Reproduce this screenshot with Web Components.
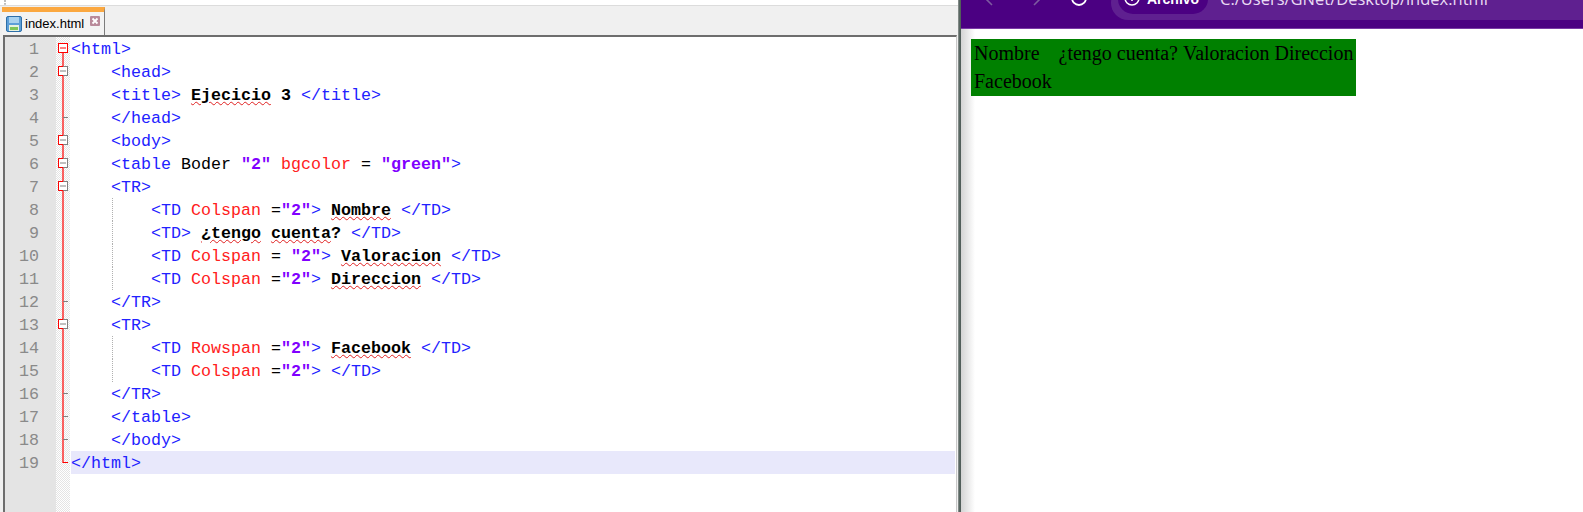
<!DOCTYPE html>
<html><head><meta charset="utf-8"><style>
html,body{margin:0;padding:0;background:#fff;overflow:hidden}
body{width:1583px;height:512px;display:flex;align-items:stretch}
editor-pane{flex:0 0 958px}
pane-splitter{flex:0 0 3px}
browser-pane{flex:1 1 auto}
</style></head><body>
<editor-pane></editor-pane>
<pane-splitter></pane-splitter>
<browser-pane></browser-pane>
<template id="ed"><style>
:host{display:flex;flex-direction:column;height:512px;background:#f0f0f0;overflow:hidden;font-family:"Liberation Sans",sans-serif;box-sizing:border-box;position:relative}
.top{height:5px;background:#fff;border-bottom:1px solid #dcdcdc;flex:none;position:relative}
.top i{position:absolute;left:4px;top:0;height:5px;border-left:2px dotted #bdbdbd}
.tabs{height:29px;flex:none;display:flex;align-items:flex-end;padding-left:2px;background:#f0f0f0}
.tab{width:103px;height:28px;box-sizing:border-box;background:#f3f3f3;border-top:5px solid #fba840;border-right:1px solid #7c7c7c;display:flex;align-items:center;padding-left:4px;gap:3px;font-size:13px;color:#000;position:relative}
.x{width:10px;height:10px;margin-left:3px;margin-top:-6px}
.frame{flex:1;margin-left:3px;width:954px;box-sizing:border-box;border:2px solid #6d6d6d;border-right:1px solid #c8c8c8;border-bottom:0;background:#fff;display:flex;min-height:0}
.num{width:51px;background:#e4e4e4;flex:none;font:16.67px/25px "Liberation Mono",monospace;color:#8a8a8a;text-align:right;box-sizing:border-box}
.num div{height:23px;padding-right:17px}
.fold{width:14px;flex:none;background-color:#f1f1f1;background-image:conic-gradient(#e4e4e4 25%,#fff 0 50%,#e4e4e4 0 75%,#fff 0);background-size:2px 2px}
.fold svg{display:block}
.code{flex:1;min-width:0;margin-left:1px;padding-right:1px}
</style>
<div class="top"><i></i></div>
<div class="tabs"><div class="tab">
<svg width="16" height="16" viewBox="0 0 16 16"><rect x=".5" y=".5" width="15" height="15" rx="1.5" fill="#5d9fd8" stroke="#2e6fa8"/><rect x="3" y="1" width="10" height="6" fill="#a9d2ef"/><rect x="3" y="9" width="10" height="6" fill="#e8f3e0"/><rect x="4" y="11" width="8" height="3" fill="#7fc65a"/></svg>
<span>index.html</span>
<svg class="x" viewBox="0 0 10 10"><rect width="10" height="10" rx="1" fill="#b98a9a"/><path d="M2.5 2.5l5 5M7.5 2.5l-5 5" stroke="#fff" stroke-width="1.8"/></svg>
</div></div>
<div class="frame"><div class="num" id="num"></div>
<div class="fold"><svg width="14" height="437" viewBox="0 0 14 437" id="fsvg"></svg></div>
<div class="code" id="code"></div></div>
</template>
<template id="sp"><style>:host{display:block;height:512px;background:linear-gradient(90deg,#a8a8a8 0,#5c6b66 33%,#4e5a56 100%)}</style></template>
<template id="ln"><style>
:host{display:block;height:23px;font:16.67px/25px "Liberation Mono",monospace;white-space:pre;position:relative;color:#000}
:host([cur]){background:#e8e8fb}
.t{color:#2222ff}.a{color:#ff2020}.s{color:#8000ff;font-weight:bold}.b{font-weight:bold;color:#000;text-decoration:underline wavy #e02020 1px;text-underline-offset:1px}.n{font-weight:bold}
.g{position:absolute;left:41px;top:0;bottom:0;border-left:1px dotted #b0b0b0}
</style><span class="g" hidden></span><slot></slot></template>
<template id="br"><style>
:host{display:flex;flex-direction:column;height:512px;background:#fff;position:relative;font-family:"Liberation Sans",sans-serif}
:host::before{content:"";position:absolute;left:0;top:29px;bottom:0;width:14px;background:linear-gradient(90deg,#d4d4d4,#fff)}
.bar{height:28px;background:#4b0082;border-bottom:1px solid #7a3aa6;position:relative;overflow:hidden;flex:none}
.omni{position:absolute;left:150px;top:-14px;width:600px;height:34px;border-radius:17px;background:#5f2090}
.chip{position:absolute;left:157px;top:-16px;height:30px;width:90px;border-radius:15px;background:#4b0082;color:#fff;font-size:14px;font-weight:bold}
.chip span{position:absolute;left:29px;top:7px}
.chip svg{position:absolute;left:6px;top:6px}
.url{position:absolute;left:259px;top:-15px;color:#eadcf4;font:16.5px/28px "Open Sans",sans-serif;white-space:nowrap}
.nav{position:absolute;top:-10px}
.page{padding:10px;position:relative;z-index:1}
.tb{width:385px;height:57px;background:#008000;font:20px/28px "Liberation Serif",serif;color:#000;box-sizing:border-box;padding:0 3px}
.r{display:flex;gap:5px;white-space:nowrap}.r span:first-child{margin-right:14px}
</style>
<div class="bar">
<svg class="nav" style="left:20px" width="16" height="16" viewBox="0 0 16 16"><path d="M11 1L4 8l7 7" fill="none" stroke="#7d5aa0" stroke-width="1.6"/></svg>
<svg class="nav" style="left:68px" width="16" height="16" viewBox="0 0 16 16"><path d="M5 1l7 7-7 7" fill="none" stroke="#7d5aa0" stroke-width="1.6"/></svg>
<svg class="nav" style="left:109px;top:-11px" width="18" height="18" viewBox="0 0 18 18"><path d="M2 9a7 7 0 1 0 14 0" fill="none" stroke="#fff" stroke-width="1.8"/></svg>
<div class="omni"></div>
<div class="chip"><svg width="16" height="16" viewBox="0 0 16 16"><circle cx="8" cy="8" r="7" fill="none" stroke="#fff" stroke-width="1.5"/><path d="M8 6v5" stroke="#fff" stroke-width="1.6"/></svg><span>Archivo</span></div>
<div class="url">C:/Users/GNet/Desktop/index.html</div>
</div>
<div class="page"><div class="tb"><div class="r"><span>Nombre</span><span>¿tengo cuenta?</span><span>Valoracion</span><span>Direccion</span></div><div>Facebook</div></div></div>
</template>
<script>
const L=[
[0,'<t>&lt;html&gt;</t>'],[4,'<t>&lt;head&gt;</t>'],[4,'<t>&lt;title&gt;</t> <b>Ejecicio</b> <n>3</n> <t>&lt;/title&gt;</t>'],[4,'<t>&lt;/head&gt;</t>'],[4,'<t>&lt;body&gt;</t>'],
[4,'<t>&lt;table</t> Boder <s>"2"</s> <a>bgcolor</a> = <s>"green"</s><t>&gt;</t>'],[4,'<t>&lt;TR&gt;</t>'],
[8,'<t>&lt;TD</t> <a>Colspan</a> =<s>"2"</s><t>&gt;</t> <b>Nombre</b> <t>&lt;/TD&gt;</t>'],
[8,'<t>&lt;TD&gt;</t> <b>¿tengo</b> <b>cuenta</b><n>?</n> <t>&lt;/TD&gt;</t>'],
[8,'<t>&lt;TD</t> <a>Colspan</a> = <s>"2"</s><t>&gt;</t> <b>Valoracion</b> <t>&lt;/TD&gt;</t>'],
[8,'<t>&lt;TD</t> <a>Colspan</a> =<s>"2"</s><t>&gt;</t> <b>Direccion</b> <t>&lt;/TD&gt;</t>'],
[4,'<t>&lt;/TR&gt;</t>'],[4,'<t>&lt;TR&gt;</t>'],
[8,'<t>&lt;TD</t> <a>Rowspan</a> =<s>"2"</s><t>&gt;</t> <b>Facebook</b> <t>&lt;/TD&gt;</t>'],
[8,'<t>&lt;TD</t> <a>Colspan</a> =<s>"2"</s><t>&gt;</t> <t>&lt;/TD&gt;</t>'],
[4,'<t>&lt;/TR&gt;</t>'],[4,'<t>&lt;/table&gt;</t>'],[4,'<t>&lt;/body&gt;</t>'],[0,'<t>&lt;/html&gt;</t>']];
class CodeLine extends HTMLElement{constructor(){super();const r=this.attachShadow({mode:'open'});r.appendChild(document.getElementById('ln').content.cloneNode(true));}
 connectedCallback(){const h=this.dataset.src.replace(/<(\/?)([tabsn])>/g,(m,c,k)=>c?'</span>':`<span class="${k}">`);const d=document.createElement('span');d.innerHTML=' '.repeat(+this.dataset.ind)+h;this.shadowRoot.appendChild(d);if(this.hasAttribute('guide'))this.shadowRoot.querySelector('.g').hidden=false;}}
customElements.define('code-line',CodeLine);
class EditorPane extends HTMLElement{constructor(){super();const r=this.attachShadow({mode:'open'});r.appendChild(document.getElementById('ed').content.cloneNode(true));
 const num=r.getElementById('num'),code=r.getElementById('code');
 L.forEach((l,i)=>{const n=document.createElement('div');n.textContent=i+1;num.appendChild(n);const c=document.createElement('code-line');c.dataset.ind=l[0];c.dataset.src=l[1];if(i==18)c.setAttribute('cur','');if(l[0]==8)c.setAttribute('guide','');code.appendChild(c);});
 let s='<path d="M7 16V425.5H12" fill="none" stroke="#f00" stroke-width="1.2"/>';
 const box=(i,red)=>{const y=i*23+6;s+=`<rect x="2.5" y="${y+.5}" width="9" height="9" fill="#fff" stroke="${red?'#f00':'#808080'}"/><path d="M4 ${y+5}h6" stroke="${red?'#f00':'#808080'}"/>`;if(!red)s+=`<path d="M7 ${y+.5}H2.5V${y+9.5}H7" fill="none" stroke="#f00"/>`;};
 box(0,true);[1,4,5,6,12].forEach(i=>box(i,false));
 [3,11,15,16,17].forEach(i=>{s+=`<path d="M7 ${i*23+11.5}h5" stroke="#808080"/>`});
 r.getElementById('fsvg').innerHTML=s;}}
customElements.define('editor-pane',EditorPane);
class PaneSplitter extends HTMLElement{constructor(){super();this.attachShadow({mode:'open'}).appendChild(document.getElementById('sp').content.cloneNode(true));}}
customElements.define('pane-splitter',PaneSplitter);
class BrowserPane extends HTMLElement{constructor(){super();this.attachShadow({mode:'open'}).appendChild(document.getElementById('br').content.cloneNode(true));}}
customElements.define('browser-pane',BrowserPane);
</script></body></html>
